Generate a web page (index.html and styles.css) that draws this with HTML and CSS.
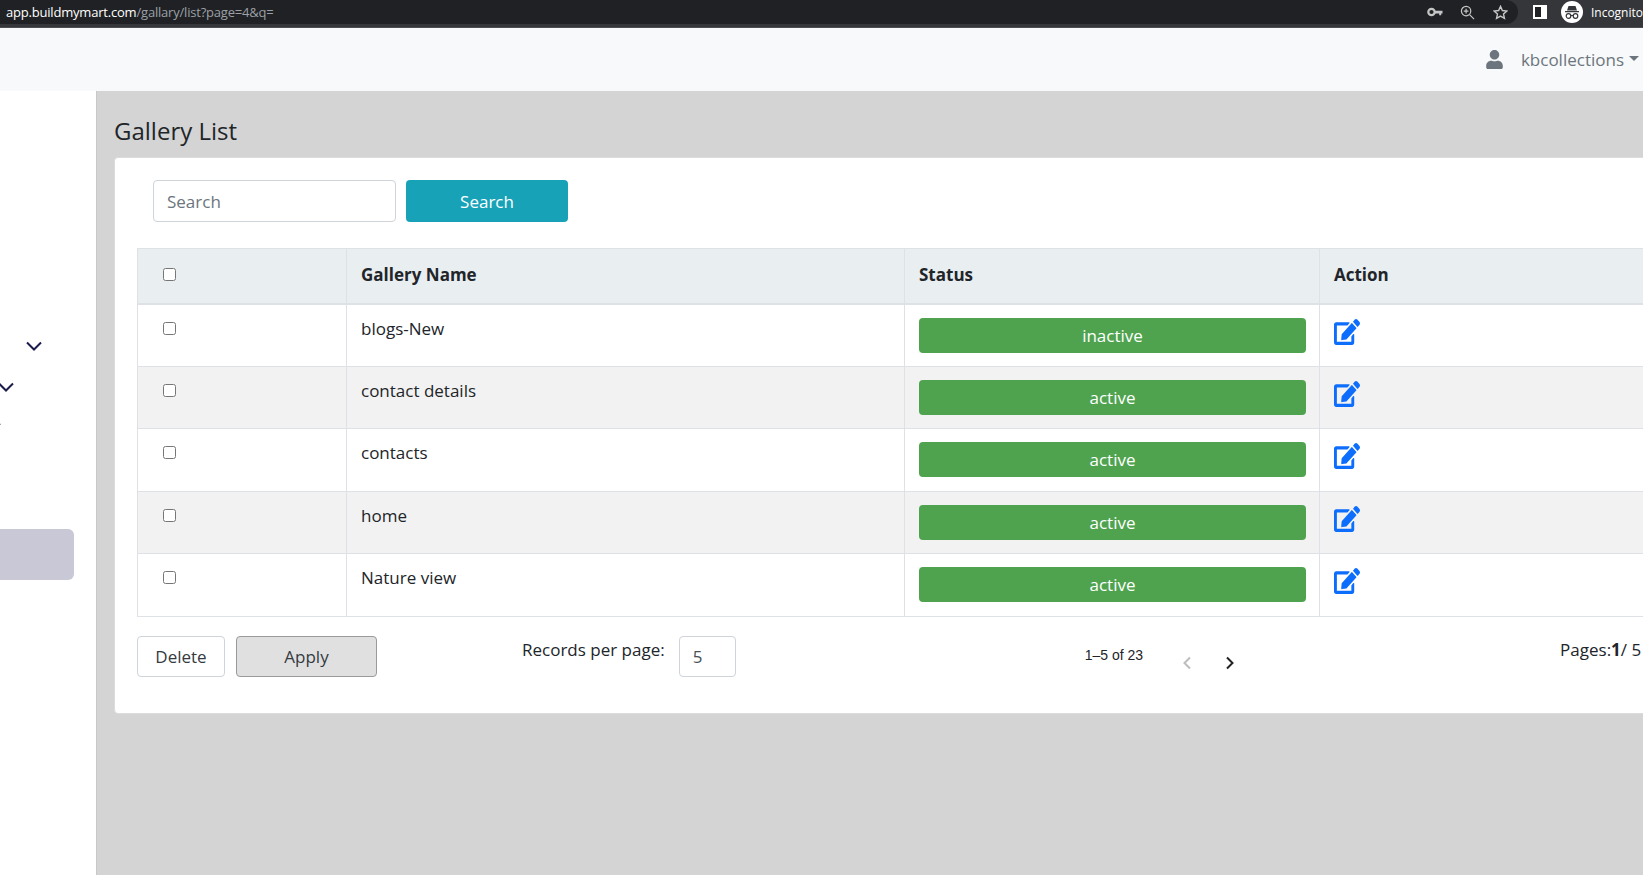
FILE: index.html
```html
<!DOCTYPE html>
<html lang="en">
  <head>
    <meta charset="UTF-8" />
    <meta name="viewport" content="width=device-width, initial-scale=1.0" />
    <title>Gallery List</title>
    <link rel="stylesheet" href="styles.css">
  </head>
  <body>
    <!-- browser chrome -->
    <div class="chrome">
      <div class="omnibox">
        <div class="url"><span class="url-host">app.buildmymart.com</span>/gallary/list?page=4&amp;q=</div>
        <svg class="chrome-icon key-icon" viewBox="0 0 16 10" width="16" height="10"><circle cx="4.5" cy="5" r="3.2" fill="none" stroke="#c4c7c5" stroke-width="2.2"/><path d="M8 3.8h7.5v2.6h-1.3v1.8h-2V6.400H8z" fill="#c4c7c5"/></svg>
        <svg class="chrome-icon zoom-icon" viewBox="0 0 16 16" width="15" height="15"><circle cx="6.500" cy="6.500" r="5" fill="none" stroke="#c4c7c5" stroke-width="1.300"/><path d="M10.200 10.200L15 15M6.500 4v5M4 6.500h5" stroke="#c4c7c5" stroke-width="1.300" fill="none"/></svg>
        <svg class="chrome-icon star-icon" viewBox="0 0 16 16" width="15" height="15"><path d="M8 1.500l2 4.400 4.800.5-3.600 3.200 1 4.700L8 11.900l-4.200 2.400 1-4.700L1.200 6.400 6 5.900z" fill="none" stroke="#c4c7c5" stroke-width="1.500"/></svg>
      </div>
      <div class="panel-icon"></div>
      <div class="incognito">
        <span class="incognito-badge">
          <svg viewBox="0 0 22 22" width="22" height="22"><path d="M7.500 5h7l1.500 4.500H6zM4 10h14v1.200H4z" fill="#35363a"/><circle cx="7.500" cy="15" r="2.300" fill="none" stroke="#35363a" stroke-width="1.200"/><circle cx="14.500" cy="15" r="2.300" fill="none" stroke="#35363a" stroke-width="1.200"/><path d="M9.800 14.500h2.400" stroke="#35363a" stroke-width="1.200"/></svg>
        </span>
        <span class="incognito-text">Incognito</span>
      </div>
    </div>

    <nav class="navbar">
      <svg class="user-icon" viewBox="0 0 448 512" width="19" height="19"><path d="M224 256c70.700 0 128-57.300 128-128S294.700 0 224 0 96 57.300 96 128s57.300 128 128 128zm89.600 32h-16.700c-22.200 10.200-46.900 16-72.900 16s-50.600-5.800-72.900-16h-16.700C60.200 288 0 348.200 0 422.400V464c0 26.500 21.500 48 48 48h352c26.500 0 48-21.500 48-48v-41.600c0-74.200-60.200-134.400-134.400-134.400z" fill="#6c757d"/></svg>
      <span class="nav-user">kbcollections</span>
      <span class="caret"></span>
    </nav>

    <div class="layout">
      <aside class="sidebar">
        <svg class="side-chevron first" viewBox="0 0 16 10" width="16" height="10"><path d="M1 1.500l7 7 7-7" fill="none" stroke="#1c1c4c" stroke-width="2"/></svg>
        <svg class="side-chevron second" viewBox="0 0 16 10" width="16" height="10"><path d="M1 1.500l7 7 7-7" fill="none" stroke="#1c1c4c" stroke-width="2"/></svg>
        <svg class="side-chevron third" viewBox="0 0 16 10" width="16" height="10"><path d="M1 1.500l7 7 7-7" fill="none" stroke="#1c1c4c" stroke-width="2"/></svg>
        <div class="side-active"></div>
      </aside>

      <main class="content">
        <h1>Gallery List</h1>
        <div class="card">
          <form class="search-row">
            <input type="text" class="search-input" placeholder="Search" />
            <button type="button" class="search-button">Search</button>
          </form>

          <table class="gallery-table">
            <colgroup>
              <col class="col-check" />
              <col class="col-name" />
              <col class="col-status" />
              <col class="col-action" />
            </colgroup>
            <thead>
              <tr>
                <th><input type="checkbox" class="check" /></th>
                <th>Gallery Name</th>
                <th>Status</th>
                <th>Action</th>
              </tr>
            </thead>
            <tbody>
              <tr>
                <td><input type="checkbox" class="check" /></td>
                <td>blogs-New</td>
                <td><div class="status">inactive</div></td>
                <td><svg class="edit-icon" viewBox="0 0 576 512" preserveAspectRatio="none"><path d="M402.600 83.200l90.200 90.200c3.800 3.800 3.800 10 0 13.800L274.400 405.600l-92.800 10.300c-12.400 1.400-22.900-9.100-21.500-21.500l10.300-92.800L388.800 83.200c3.800-3.800 10-3.800 13.800 0zm162-22.900l-48.800-48.800c-15.200-15.200-39.900-15.200-55.200 0l-35.400 35.400c-3.800 3.800-3.800 10 0 13.800l90.200 90.200c3.800 3.800 10 3.800 13.800 0l35.400-35.400c15.200-15.300 15.200-40 0-55.200zM384 346.200V448H64V128h229.800c3.200 0 6.200-1.300 8.500-3.500l40-40c7.600-7.600 2.200-20.500-8.500-20.500H48C21.500 64 0 85.500 0 112v352c0 26.500 21.500 48 48 48h352c26.500 0 48-21.500 48-48V306.200c0-10.700-12.900-16-20.500-8.500l-40 40c-2.200 2.300-3.500 5.300-3.500 8.500z"/></svg></td>
              </tr>
              <tr>
                <td><input type="checkbox" class="check" /></td>
                <td>contact details</td>
                <td><div class="status">active</div></td>
                <td><svg class="edit-icon" viewBox="0 0 576 512" preserveAspectRatio="none"><path d="M402.600 83.200l90.200 90.200c3.800 3.800 3.800 10 0 13.800L274.400 405.600l-92.800 10.300c-12.400 1.400-22.900-9.100-21.500-21.500l10.300-92.800L388.800 83.200c3.800-3.800 10-3.800 13.800 0zm162-22.900l-48.800-48.800c-15.200-15.200-39.900-15.200-55.200 0l-35.400 35.400c-3.800 3.800-3.800 10 0 13.800l90.200 90.200c3.800 3.800 10 3.800 13.800 0l35.400-35.400c15.200-15.300 15.200-40 0-55.200zM384 346.200V448H64V128h229.800c3.200 0 6.200-1.300 8.500-3.500l40-40c7.600-7.600 2.200-20.500-8.500-20.500H48C21.500 64 0 85.500 0 112v352c0 26.500 21.500 48 48 48h352c26.500 0 48-21.500 48-48V306.200c0-10.700-12.900-16-20.500-8.500l-40 40c-2.200 2.300-3.500 5.300-3.500 8.500z"/></svg></td>
              </tr>
              <tr>
                <td><input type="checkbox" class="check" /></td>
                <td>contacts</td>
                <td><div class="status">active</div></td>
                <td><svg class="edit-icon" viewBox="0 0 576 512" preserveAspectRatio="none"><path d="M402.600 83.200l90.200 90.200c3.800 3.800 3.800 10 0 13.800L274.400 405.600l-92.800 10.300c-12.400 1.400-22.900-9.100-21.500-21.500l10.300-92.800L388.800 83.200c3.800-3.800 10-3.800 13.800 0zm162-22.900l-48.800-48.800c-15.200-15.200-39.900-15.200-55.200 0l-35.400 35.400c-3.800 3.800-3.800 10 0 13.800l90.200 90.200c3.800 3.800 10 3.800 13.800 0l35.400-35.400c15.200-15.300 15.200-40 0-55.200zM384 346.200V448H64V128h229.800c3.200 0 6.200-1.300 8.500-3.500l40-40c7.600-7.600 2.200-20.500-8.500-20.500H48C21.500 64 0 85.500 0 112v352c0 26.500 21.500 48 48 48h352c26.500 0 48-21.500 48-48V306.200c0-10.700-12.900-16-20.500-8.500l-40 40c-2.200 2.300-3.500 5.300-3.500 8.500z"/></svg></td>
              </tr>
              <tr>
                <td><input type="checkbox" class="check" /></td>
                <td>home</td>
                <td><div class="status">active</div></td>
                <td><svg class="edit-icon" viewBox="0 0 576 512" preserveAspectRatio="none"><path d="M402.600 83.200l90.200 90.200c3.800 3.800 3.800 10 0 13.800L274.400 405.600l-92.800 10.300c-12.400 1.400-22.900-9.100-21.500-21.500l10.300-92.800L388.800 83.200c3.800-3.800 10-3.800 13.800 0zm162-22.900l-48.800-48.800c-15.200-15.200-39.900-15.200-55.200 0l-35.400 35.400c-3.800 3.800-3.800 10 0 13.800l90.200 90.200c3.800 3.800 10 3.800 13.800 0l35.400-35.400c15.200-15.300 15.200-40 0-55.200zM384 346.200V448H64V128h229.800c3.200 0 6.200-1.300 8.500-3.500l40-40c7.600-7.600 2.200-20.500-8.500-20.500H48C21.500 64 0 85.500 0 112v352c0 26.500 21.500 48 48 48h352c26.500 0 48-21.500 48-48V306.200c0-10.700-12.900-16-20.500-8.500l-40 40c-2.200 2.300-3.500 5.300-3.500 8.500z"/></svg></td>
              </tr>
              <tr>
                <td><input type="checkbox" class="check" /></td>
                <td>Nature view</td>
                <td><div class="status">active</div></td>
                <td><svg class="edit-icon" viewBox="0 0 576 512" preserveAspectRatio="none"><path d="M402.600 83.200l90.200 90.200c3.800 3.800 3.800 10 0 13.800L274.400 405.600l-92.800 10.300c-12.400 1.400-22.900-9.100-21.500-21.500l10.300-92.800L388.800 83.200c3.800-3.800 10-3.800 13.800 0zm162-22.900l-48.800-48.800c-15.200-15.200-39.900-15.200-55.200 0l-35.400 35.400c-3.800 3.800-3.800 10 0 13.800l90.200 90.200c3.800 3.800 10 3.800 13.800 0l35.400-35.400c15.200-15.300 15.200-40 0-55.200zM384 346.200V448H64V128h229.800c3.200 0 6.200-1.300 8.500-3.500l40-40c7.600-7.600 2.200-20.500-8.500-20.500H48C21.500 64 0 85.500 0 112v352c0 26.500 21.500 48 48 48h352c26.500 0 48-21.500 48-48V306.200c0-10.700-12.900-16-20.500-8.500l-40 40c-2.200 2.300-3.500 5.300-3.500 8.500z"/></svg></td>
              </tr>
            </tbody>
          </table>

          <div class="table-footer">
            <button type="button" class="btn-delete">Delete</button>
            <button type="button" class="btn-apply">Apply</button>
            <span class="records-label">Records per page:</span>
            <input type="text" class="records-input" value="5" />
            <span class="range">1–5 of 23</span>
            <svg class="pager prev" viewBox="0 0 10 14" width="10" height="14"><path d="M8 1.500L2.500 7 8 12.500" fill="none" stroke="#bdbdbd" stroke-width="2"/></svg>
            <svg class="pager next" viewBox="0 0 10 14" width="10" height="14"><path d="M2 1.500L7.500 7 2 12.500" fill="none" stroke="#222" stroke-width="2"/></svg>
            <span class="pages">Pages:<b>1</b>/ 5</span>
          </div>
        </div>
      </main>
    </div>
  </body>
</html>
```

FILE: styles.css
```css
* {
  box-sizing: border-box;
}
html,
body {
  height: 100%;
}
body {
  margin: 0;
  display: flex;
  flex-direction: column;
  overflow: hidden;
  font-family: "Open Sans", "Noto Sans", "Liberation Sans", sans-serif;
  font-size: 16px;
  color: #212529;
  background-color: #d4d4d4;
}

/* browser chrome */
.chrome {
  height: 28px;
  flex: none;
  display: flex;
  align-items: flex-start;
  background-color: #35363a;
  border-bottom: 1px solid #4c4d50;
}
.omnibox {
  width: 1525px;
  height: 24px;
  display: flex;
  align-items: center;
  background-color: #202124;
  border-radius: 0 12px 12px 0;
  padding-left: 6px;
}
.url {
  flex: 1;
  font-family: "Open Sans", "Liberation Sans", sans-serif;
  font-size: 13px;
  letter-spacing: -0.2px;
  color: #9aa0a6;
  white-space: nowrap;
}
.url-host {
  color: #fff;
}
.chrome-icon {
  flex: none;
}
.key-icon {
  margin-right: 17px;
}
.zoom-icon {
  margin-right: 18px;
}
.star-icon {
  margin-right: 10px;
}
.panel-icon {
  width: 14px;
  height: 14px;
  margin: 5px 0 0 15px;
  background-color: #202124;
  border: 2px solid #fff;
  border-right-width: 6px;
}
.incognito {
  display: flex;
  align-items: center;
  margin-left: 14px;
  height: 24px;
  white-space: nowrap;
}
.incognito-badge {
  width: 22px;
  height: 22px;
  border-radius: 50%;
  background-color: #fff;
  display: block;
}
.incognito-badge svg {
  display: block;
}
.incognito-text {
  margin-left: 8px;
  font-size: 12px;
  color: #fff;
}

/* navbar */
.navbar {
  height: 63px;
  flex: none;
  display: flex;
  align-items: center;
  justify-content: flex-end;
  background-color: #f8f9fa;
  padding-right: 4px;
}
.user-icon {
  margin-right: 17px;
}
.nav-user {
  font-size: 17px;
  color: #6c757d;
}
.caret {
  margin-left: 5px;
  margin-bottom: 2px;
  border-top: 5px solid #6c757d;
  border-left: 5px solid transparent;
  border-right: 5px solid transparent;
}

.layout {
  flex: 1;
  display: flex;
  min-height: 0;
}

/* sidebar, scrolled off to the left */
.sidebar {
  width: 97px;
  flex: none;
  background-color: #fff;
  border-right: 1px solid #c8c8c8;
  padding-top: 250px;
}
.side-chevron {
  display: block;
}
.side-chevron.first {
  margin-left: 26px;
}
.side-chevron.second {
  margin: 31px 0 0 -2px;
}
.side-chevron.third {
  margin: 30px 0 0 -15px;
}
.side-active {
  width: 74px;
  height: 51px;
  margin-top: 97px;
  background-color: #c9c8d6;
  border-radius: 0 6px 6px 0;
}

/* content */
.content {
  flex: 1;
  min-width: 0;
  padding: 23px 0 0 17px;
}
h1 {
  margin: 0 0 10px 0;
  font-size: 24px;
  line-height: 33px;
  font-weight: 500;
  color: #212529;
}
.card {
  width: 1560px;
  height: 557px;
  background-color: #fff;
  border-radius: 4px;
  border: 1px solid #dcdcdc;
  padding: 22px 0 0 22px;
}
.search-row {
  display: flex;
  gap: 10px;
  margin-left: 16px;
}
.search-input {
  width: 243px;
  height: 42px;
  padding: 0 13px;
  border: 1px solid #ced4da;
  border-radius: 4px;
  font: inherit;
  font-size: 17px;
}
.search-input::placeholder {
  color: #6c757d;
}
.search-button {
  width: 162px;
  height: 42px;
  border: none;
  border-radius: 4px;
  background-color: #17a2b8;
  color: #fff;
  font: inherit;
  font-size: 17px;
}

.gallery-table {
  width: 1507px;
  margin-top: 26px;
  border-collapse: collapse;
  table-layout: fixed;
  font-size: 17px;
}
.col-check {
  width: 209px;
}
.col-name {
  width: 558px;
}
.col-status {
  width: 415px;
}
.col-action {
  width: 325px;
}
.gallery-table th,
.gallery-table td {
  border: 1px solid #dee2e6;
  padding: 13px 13px 0 14px;
  text-align: left;
  vertical-align: top;
}
.gallery-table th {
  height: 55px;
  padding-top: 14px;
  background-color: #e9eef1;
  border-bottom-width: 2px;
  font-weight: 700;
}
.gallery-table td {
  height: 62.600px;
  padding-top: 12px;
}
.gallery-table tbody tr:nth-child(even) {
  background-color: #f2f2f2;
}
.check {
  display: block;
  width: 13px;
  height: 13px;
  margin: 5px 0 0 11px;
}
.status {
  height: 35px;
  margin-top: 1px;
  background-color: #4fa34f;
  border-radius: 4px;
  color: #fff;
  text-align: center;
  line-height: 36px;
}
.edit-icon {
  display: block;
  width: 26px;
  height: 26px;
  margin-top: 2px;
  fill: #0d6efd;
}

.table-footer {
  display: flex;
  align-items: flex-start;
  margin-top: 19px;
  font-size: 17px;
  white-space: nowrap;
}
.btn-delete,
.btn-apply {
  height: 41px;
  border-radius: 4px;
  font: inherit;
  color: #343a40;
}
.btn-delete {
  width: 88px;
  background-color: #fff;
  border: 1px solid #ced4da;
}
.btn-apply {
  width: 141px;
  margin-left: 11px;
  background-color: #e0e0e0;
  border: 1px solid #9a9a9a;
}
.records-label {
  margin-left: 145px;
  line-height: 28px;
}
.records-input {
  width: 57px;
  height: 41px;
  margin-left: 14px;
  padding: 0 13px;
  border: 1px solid #ced4da;
  border-radius: 4px;
  font: inherit;
  color: #495057;
}
.range {
  margin-left: 349px;
  margin-top: 9px;
  font-family: "Liberation Sans", Arial, sans-serif;
  font-size: 14px;
  line-height: 20px;
}
.pager {
  margin-top: 20px;
}
.prev {
  margin-left: 39px;
}
.next {
  margin-left: 33px;
}
.pages {
  margin-left: 325px;
  line-height: 28px;
}
.pages b {
  font-weight: 700;
}
```
